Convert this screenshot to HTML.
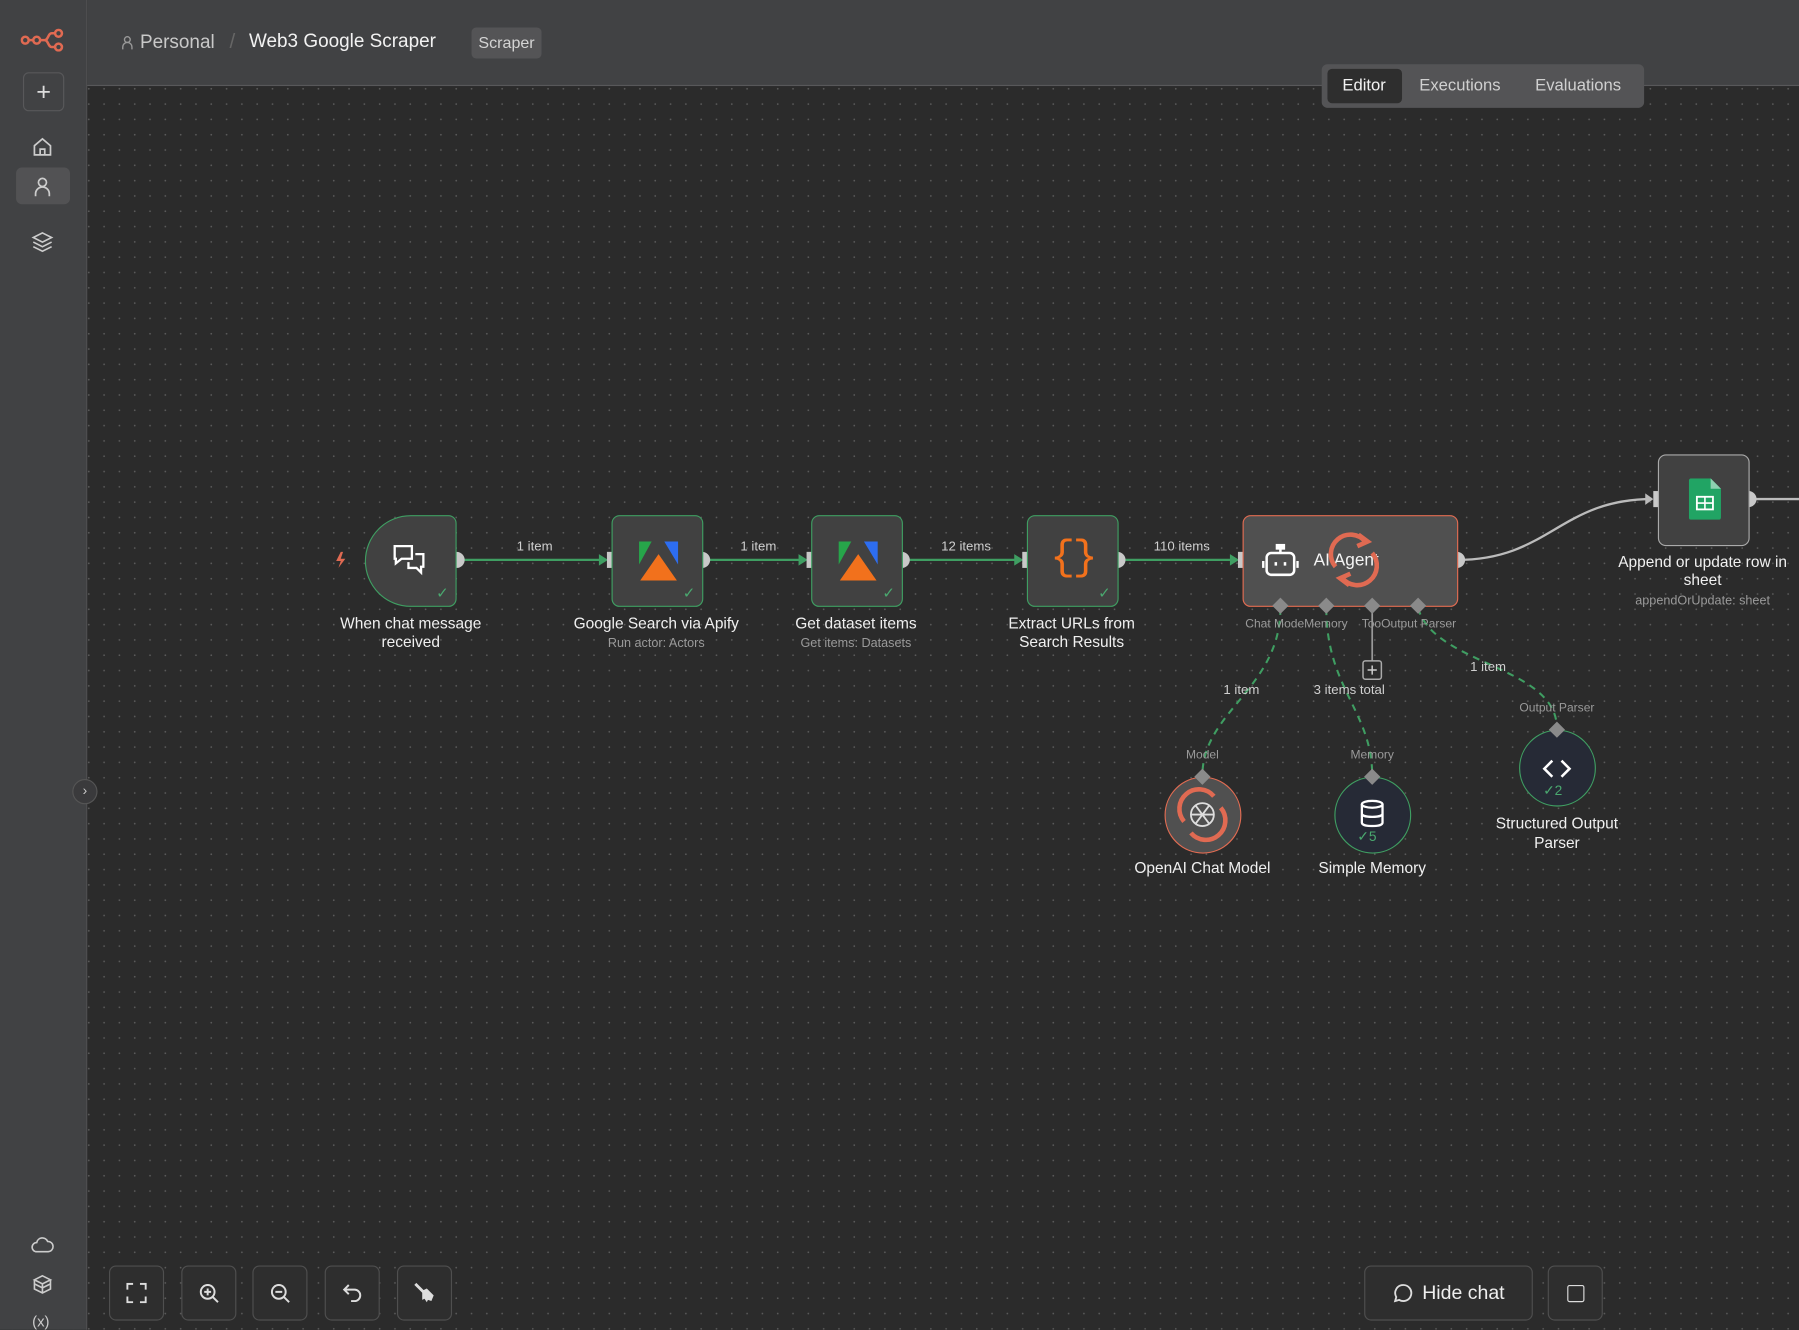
<!DOCTYPE html>
<html><head><meta charset="utf-8"><style>
*{box-sizing:border-box;margin:0;padding:0}
html,body{width:1799px;height:1330px;overflow:hidden;background:#2b2b2b;font-family:"Liberation Sans",sans-serif}
#w{position:absolute;left:0;top:0;width:1568px;height:1159px;transform:scale(1.14732);transform-origin:0 0;
background-color:#2b2b2b;background-image:radial-gradient(circle,#5a5a5a 0.7px,transparent 0.9px);background-size:13.35px 13.35px;background-position:4px 4px}
.abs{position:absolute}
#side{left:0;top:0;width:76px;height:1159px;background:#414244;border-right:1px solid #4e4e50}
#head{left:76px;top:0;width:1492px;height:75px;background:#414244;border-bottom:1px solid #58585a}
.node{position:absolute;background:#414141;border:1.5px solid #3f9e62;border-radius:7px;width:80px;height:80px}
.lbl{position:absolute;color:#f0f0f0;font-size:13.5px;text-align:center;line-height:16px;transform:translateX(-50%)}
.sub{position:absolute;color:#9a9a9a;font-size:11px;text-align:center;transform:translateX(-50%);white-space:nowrap}
.el{position:absolute;color:#cfcfcf;font-size:11.5px;transform:translateX(-50%);white-space:nowrap}
.tb{position:absolute;top:1103px;width:48px;height:48px;border:1px solid #4f4f4f;border-radius:6px;background:#2e2e2e;display:flex;align-items:center;justify-content:center}
.chk{position:absolute;right:6px;bottom:3px;color:#4aa86f;font-size:13px}
.si{position:absolute;left:27px}
</style></head><body><div id="w">
<div id="side" class="abs">
<svg class="abs" style="left:18px;top:25px" width="38" height="20" viewBox="0 0 38 20"><g fill="none" stroke="#e06a52" stroke-width="2.2"><circle cx="4" cy="10" r="3"/><circle cx="14" cy="10" r="3"/><path d="M7 10h4M17 10h4c3 0 3-6 6-6h3M21 10c3 0 3 6 6 6h3"/><circle cx="33" cy="4" r="3"/><circle cx="33" cy="16" r="3"/></g></svg>
<div class="abs" style="left:20px;top:63px;width:36px;height:34px;border:1px solid #58585a;border-radius:5px;color:#ddd;font-size:22px;text-align:center;line-height:31px">+</div>
<svg class="si" style="top:118px" width="20" height="20" viewBox="0 0 20 20" fill="none" stroke="#ccc" stroke-width="1.5"><path d="M3 9l7-6 7 6v8H3zM8 17v-5h4v5"/></svg>
<div class="abs" style="left:14px;top:146px;width:47px;height:32px;background:#525254;border-radius:5px"></div>
<svg class="si" style="top:153px" width="20" height="20" viewBox="0 0 20 20" fill="none" stroke="#ccc" stroke-width="1.5"><circle cx="10" cy="6" r="3.5"/><path d="M4 18v-2a6 6 0 0112 0v2"/></svg>
<svg class="si" style="top:201px" width="20" height="20" viewBox="0 0 20 20" fill="none" stroke="#ccc" stroke-width="1.4"><path d="M10 2l8 4-8 4-8-4zM2 10l8 4 8-4M2 14l8 4 8-4"/></svg>
<svg class="si" style="top:1076px" width="20" height="18" viewBox="0 0 20 18" fill="none" stroke="#ccc" stroke-width="1.4"><path d="M5 15a4 4 0 010-8 5 5 0 019.5-1A4 4 0 0115 15z"/></svg>
<svg class="si" style="top:1110px" width="20" height="20" viewBox="0 0 20 20" fill="none" stroke="#ccc" stroke-width="1.4"><path d="M10 2l7 3.5-7 3.5-7-3.5zM3 5.5v8L10 17l7-3.5v-8M10 9v8M3 9l7 3.5 7-3.5"/></svg>
<div class="abs" style="left:28px;top:1144px;color:#ccc;font-size:13px">(x)</div>
</div>
<div id="head" class="abs">
<svg class="abs" style="left:30px;top:31px" width="10" height="13" viewBox="0 0 10 13" fill="none" stroke="#999" stroke-width="1.2"><circle cx="5" cy="3.5" r="2.5"/><path d="M1 12v-2a4 4 0 018 0v2"/></svg>
<div class="abs" style="left:46px;top:28px;color:#c9c9c9;font-size:16.5px">Personal</div>
<div class="abs" style="left:124px;top:26px;color:#666;font-size:18px">/</div>
<div class="abs" style="left:141px;top:27px;color:#f2f2f2;font-size:16.5px">Web3 Google Scraper</div>
<div class="abs" style="left:335px;top:24px;width:61px;height:27px;background:#545456;border-radius:4px;color:#d4d4d4;font-size:14px;text-align:center;line-height:27px">Scraper</div>
</div>
<div class="abs" style="left:1152px;top:56px;width:281px;height:38px;background:#545456;border-radius:5px"></div>
<div class="abs" style="left:1157px;top:60px;width:65px;height:30px;background:#2e2e2e;border-radius:4px"></div>
<div class="abs" style="left:1170px;top:67px;color:#f2f2f2;font-size:14.5px">Editor</div>
<div class="abs" style="left:1237px;top:67px;color:#d0d0d0;font-size:14.5px">Executions</div>
<div class="abs" style="left:1338px;top:67px;color:#d0d0d0;font-size:14.5px">Evaluations</div>
<div class="abs" style="left:63px;top:679px;width:22px;height:22px;border-radius:50%;background:#3a3a3c;border:1px solid #555;color:#ccc;font-size:12px;text-align:center;line-height:19px">›</div>

<svg class="abs" style="left:0;top:0" width="1568" height="1159">
<g stroke="#3f9e62" stroke-width="2" fill="none">
<path d="M398 488H527M612 488H701M786 488H889M974 488H1077"/>
</g>
<g fill="#3f9e62"><path d="M522 483l8 5-8 5zM696 483l8 5-8 5zM884 483l8 5-8 5zM1072 483l8 5-8 5z"/></g>
<path d="M1270 488C1350 488 1360 435 1440 435" stroke="#bbb" stroke-width="2" fill="none"/>
<path d="M1524 435H1568" stroke="#bbb" stroke-width="2"/>
<path d="M1434 430l7 5-7 5z" fill="#bbb"/>
<g stroke="#3f9e62" stroke-width="1.8" fill="none" stroke-dasharray="6 5">
<path d="M1116 530C1116 600 1048 620 1048 676"/>
<path d="M1156 530C1156 600 1196 620 1196 676"/>
<path d="M1236 530C1250 580 1357 580 1357 635"/>
</g>
<path d="M1196 530V576" stroke="#999" stroke-width="1.5"/>
<rect x="1188" y="576" width="16" height="16" rx="2" fill="#2b2b2b" stroke="#aaa" stroke-width="1.3"/>
<path d="M1196 580v8M1192 584h8" stroke="#ccc" stroke-width="1.3"/>
<g fill="#c8c8c8">
<circle cx="398" cy="488" r="7"/><circle cx="612" cy="488" r="7"/><circle cx="786" cy="488" r="7"/><circle cx="974" cy="488" r="7"/><circle cx="1270" cy="488" r="7"/><circle cx="1524" cy="435" r="7"/>
<rect x="529" y="481" width="7" height="14"/><rect x="703" y="481" width="7" height="14"/><rect x="891" y="481" width="7" height="14"/><rect x="1079" y="481" width="7" height="14"/><rect x="1441" y="428" width="7" height="14"/>
</g>
<path d="M297 481l-4 8h4l-2 6 6-8h-4l2-6z" fill="#e06a52"/>
</svg>

<div class="node" style="left:318px;top:449px;border-radius:40px 7px 7px 40px">
<svg class="abs" style="left:22px;top:22px" width="34" height="34" viewBox="0 0 34 34" fill="none" stroke="#fff" stroke-width="2"><path d="M3 4h15v11H9l-5 4v-4H3zM21 11h7v11h-2v5l-4-4h-7v-5"/></svg><span class="chk">✓</span></div>
<div class="node" style="left:533px;top:449px"><svg class="abs" style="left:21px;top:20px" width="38" height="38" viewBox="0 0 38 38"><path d="M2 2h11L2 22z" fill="#27a54a"/><path d="M24 2h12v20z" fill="#2d6df0"/><path d="M19 13L35 36H3z" fill="#f2711c"/></svg><span class="chk">✓</span></div>
<div class="node" style="left:707px;top:449px"><svg class="abs" style="left:21px;top:20px" width="38" height="38" viewBox="0 0 38 38"><path d="M2 2h11L2 22z" fill="#27a54a"/><path d="M24 2h12v20z" fill="#2d6df0"/><path d="M19 13L35 36H3z" fill="#f2711c"/></svg><span class="chk">✓</span></div>
<div class="node" style="left:895px;top:449px"><div class="abs" style="left:0;width:78px;top:16px;text-align:center;color:#f2711c;font-size:36px;font-family:'Liberation Mono',monospace;letter-spacing:-2px">{}</div><span class="chk">✓</span></div>
<div class="node" style="left:1083px;top:449px;width:188px;background:#505050;border-color:#e26c52">
<svg class="abs" style="left:16px;top:24px" width="32" height="30" viewBox="0 0 32 30" fill="none" stroke="#fff" stroke-width="2.2"><path d="M16 2v6"/><rect x="13" y="1" width="6" height="3" fill="#fff"/><rect x="4" y="8" width="24" height="19" rx="4"/><path d="M1 15v6M31 15v6"/><path d="M12 16v3M20 16v3"/></svg>
<div class="abs" style="left:61px;top:30px;color:#f4f4f4;font-size:15px">AI Agent</div>
<svg class="abs" style="left:70px;top:10px" width="52" height="56" viewBox="0 0 52 56" fill="none" stroke="#e06a52" stroke-width="4"><path d="M10 34A17 17 0 0136 12"/><path d="M42 22A17 17 0 0116 44"/><path d="M30 6l8 6-9 4M22 50l-8-6 9-4"/></svg>
</div>
<div class="abs" style="left:1111px;top:523px;width:10px;height:10px;background:#8a8a8a;transform:rotate(45deg)"></div>
<div class="abs" style="left:1151px;top:523px;width:10px;height:10px;background:#8a8a8a;transform:rotate(45deg)"></div>
<div class="abs" style="left:1191px;top:523px;width:10px;height:10px;background:#8a8a8a;transform:rotate(45deg)"></div>
<div class="abs" style="left:1231px;top:523px;width:10px;height:10px;background:#8a8a8a;transform:rotate(45deg)"></div>
<div class="node" style="left:1445px;top:396px;border-color:#aaa"><svg class="abs" style="left:26px;top:20px" width="28" height="36" viewBox="0 0 28 36"><path d="M2 0h17l9 9v25a2 2 0 01-2 2H2a2 2 0 01-2-2V2a2 2 0 012-2z" fill="#21a464"/><path d="M19 0v9h9z" fill="#8ed1b1"/><rect x="7" y="16" width="14" height="11" fill="none" stroke="#fff" stroke-width="1.6"/><path d="M7 21.5h14M14 16v11" stroke="#fff" stroke-width="1.4"/></svg></div>

<div class="abs" style="left:1015px;top:677px;width:67px;height:67px;border-radius:50%;background:#505050;border:1.5px solid #e26c52"></div>
<svg class="abs" style="left:1022px;top:684px" width="52" height="52" viewBox="0 0 52 52" fill="none"><path d="M10 32A17 17 0 0136 10" stroke="#e06a52" stroke-width="4"/><path d="M42 20A17 17 0 0116 42" stroke="#e06a52" stroke-width="4"/><g stroke="#ddd" stroke-width="1.6"><circle cx="26" cy="26" r="10"/><path d="M20 18l12 16M32 18L20 34M16 26h20"/></g></svg>
<div class="abs" style="left:1163px;top:677px;width:67px;height:67px;border-radius:50%;background:#262a36;border:1.5px solid #3f9e62"></div>
<svg class="abs" style="left:1185px;top:697px" width="22" height="24" viewBox="0 0 22 24" fill="none" stroke="#fff" stroke-width="2"><ellipse cx="11" cy="4" rx="9" ry="3"/><path d="M2 4v16c0 2 4 3 9 3s9-1 9-3V4M2 12c0 2 4 3 9 3s9-1 9-3"/></svg>
<div class="abs" style="left:1183px;top:722px;color:#4aa86f;font-size:12px">✓5</div>
<div class="abs" style="left:1324px;top:636px;width:67px;height:67px;border-radius:50%;background:#262a36;border:1.5px solid #3f9e62"></div>
<svg class="abs" style="left:1344px;top:660px" width="26" height="20" viewBox="0 0 26 20" fill="none" stroke="#fff" stroke-width="2.2"><path d="M9 3L2 10l7 7M17 3l7 7-7 7"/></svg>
<div class="abs" style="left:1345px;top:682px;color:#4aa86f;font-size:12px">✓2</div>
<div class="abs" style="left:1043px;top:672px;width:10px;height:10px;background:#8a8a8a;transform:rotate(45deg)"></div>
<div class="abs" style="left:1191px;top:672px;width:10px;height:10px;background:#8a8a8a;transform:rotate(45deg)"></div>
<div class="abs" style="left:1352px;top:631px;width:10px;height:10px;background:#8a8a8a;transform:rotate(45deg)"></div>

<div class="lbl" style="left:358px;top:536px;width:150px">When chat message received</div>
<div class="lbl" style="left:572px;top:536px;width:170px">Google Search via Apify</div>
<div class="sub" style="left:572px;top:555px">Run actor: Actors</div>
<div class="lbl" style="left:746px;top:536px;width:150px">Get dataset items</div>
<div class="sub" style="left:746px;top:555px">Get items: Datasets</div>
<div class="lbl" style="left:934px;top:536px;width:140px">Extract URLs from Search Results</div>
<div class="lbl" style="left:1484px;top:482px;width:170px">Append or update row in sheet</div>
<div class="sub" style="left:1484px;top:518px">appendOrUpdate: sheet</div>
<div class="lbl" style="left:1048px;top:749px;width:160px">OpenAI Chat Model</div>
<div class="lbl" style="left:1196px;top:749px;width:140px">Simple Memory</div>
<div class="lbl" style="left:1357px;top:709px;width:140px;line-height:17px">Structured Output Parser</div>

<div class="el" style="left:466px;top:471px">1 item</div>
<div class="el" style="left:661px;top:471px">1 item</div>
<div class="el" style="left:842px;top:471px">12 items</div>
<div class="el" style="left:1030px;top:471px">110 items</div>
<div class="el" style="left:1082px;top:596px">1 item</div>
<div class="el" style="left:1176px;top:596px">3 items total</div>
<div class="el" style="left:1297px;top:576px">1 item</div>
<div class="sub" style="left:1130px;top:538px;font-size:10.5px">Chat ModeMemory</div>
<div class="sub" style="left:1228px;top:538px;font-size:10.5px">TooOutput Parser</div>
<div class="sub" style="left:1048px;top:652px;font-size:10.5px">Model</div>
<div class="sub" style="left:1196px;top:652px;font-size:10.5px">Memory</div>
<div class="sub" style="left:1357px;top:611px;font-size:10.5px">Output Parser</div>

<div class="tb" style="left:95px"><svg width="18" height="18" viewBox="0 0 18 18" fill="none" stroke="#ddd" stroke-width="1.7"><path d="M1 6V1h5M12 1h5v5M17 12v5h-5M6 17H1v-5"/></svg></div>
<div class="tb" style="left:158px"><svg width="18" height="18" viewBox="0 0 18 18" fill="none" stroke="#ddd" stroke-width="1.7"><circle cx="8" cy="8" r="6"/><path d="M12.5 12.5L17 17M8 5v6M5 8h6"/></svg></div>
<div class="tb" style="left:220px"><svg width="18" height="18" viewBox="0 0 18 18" fill="none" stroke="#ddd" stroke-width="1.7"><circle cx="8" cy="8" r="6"/><path d="M12.5 12.5L17 17M5 8h6"/></svg></div>
<div class="tb" style="left:283px"><svg width="18" height="18" viewBox="0 0 18 18" fill="none" stroke="#ddd" stroke-width="1.7"><path d="M6 2L2 6l4 4M2 6h9a5 5 0 010 10H8"/></svg></div>
<div class="tb" style="left:346px"><svg width="20" height="20" viewBox="0 0 20 20"><path d="M2 2l7 7" stroke="#ddd" stroke-width="2.5"/><path d="M8 8l4-2 6 6-2 5-3-1-1 2-2-3-2 1z" fill="#ddd"/></svg></div>
<div class="tb" style="left:1189px;width:147px;gap:8px;color:#eee;font-size:17px"><svg width="18" height="18" viewBox="0 0 18 18" fill="none" stroke="#ddd" stroke-width="1.6"><path d="M9 2a7 7 0 11-3.5 13L2 16l1-3.5A7 7 0 019 2z"/></svg>Hide chat</div>
<div class="tb" style="left:1349px"><div style="width:15px;height:15px;border:1.7px solid #ddd;border-radius:2px"></div></div>
</div></body></html>
